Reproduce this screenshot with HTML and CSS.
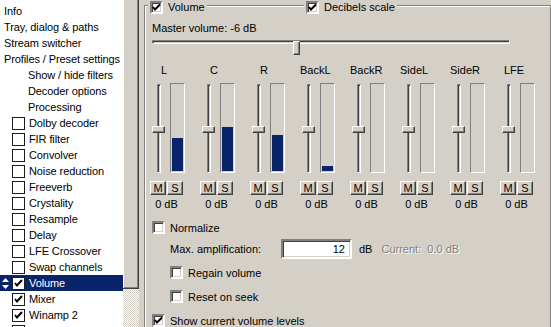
FILE: index.html
```html
<!DOCTYPE html>
<html lang="en">
<head>
    <meta charset="UTF-8">
    <title>Volume</title>
    <link rel="stylesheet" href="styles.css">
</head>
<body>
    <div class="sidebar">
        <div class="tree">
            <div class="tree-item">Info</div>
            <div class="tree-item">Tray, dialog &amp; paths</div>
            <div class="tree-item">Stream switcher</div>
            <div class="tree-item">Profiles / Preset settings</div>
            <div class="tree-item sub">Show / hide filters</div>
            <div class="tree-item sub">Decoder options</div>
            <div class="tree-item sub">Processing</div>
            <div class="tree-item filter"><span class="box"></span>Dolby decoder</div>
            <div class="tree-item filter"><span class="box"></span>FIR filter</div>
            <div class="tree-item filter"><span class="box"></span>Convolver</div>
            <div class="tree-item filter"><span class="box"></span>Noise reduction</div>
            <div class="tree-item filter"><span class="box"></span>Freeverb</div>
            <div class="tree-item filter"><span class="box"></span>Crystality</div>
            <div class="tree-item filter"><span class="box"></span>Resample</div>
            <div class="tree-item filter"><span class="box"></span>Delay</div>
            <div class="tree-item filter"><span class="box"></span>LFE Crossover</div>
            <div class="tree-item filter"><span class="box"></span>Swap channels</div>
            <div class="tree-item filter selected">
                <svg class="updown" width="7" height="11" viewBox="0 0 7 11"><path d="M3.5 0 L7 4 L0 4 Z M0 7 L7 7 L3.5 11 Z" fill="#fff"/></svg>
                <span class="box checked"><svg width="11" height="11" viewBox="0 0 11 11"><path d="M2 5 L4 7.5 L9 2" stroke="#000" stroke-width="2" fill="none"/></svg></span>Volume
            </div>
            <div class="tree-item filter"><span class="box checked"><svg width="11" height="11" viewBox="0 0 11 11"><path d="M2 5 L4 7.5 L9 2" stroke="#000" stroke-width="2" fill="none"/></svg></span>Mixer</div>
            <div class="tree-item filter"><span class="box checked"><svg width="11" height="11" viewBox="0 0 11 11"><path d="M2 5 L4 7.5 L9 2" stroke="#000" stroke-width="2" fill="none"/></svg></span>Winamp 2</div>
            <div class="tree-item filter"><span class="box"></span></div>
        </div>
        <div class="scrollbar">
            <div class="scroll-thumb"></div>
        </div>
    </div>

    <div class="panel">
        <div class="groupbox">
            <label class="gb-title">
                <span class="check on"><svg width="9" height="9" viewBox="0 0 9 9"><path d="M1 4 L3 6.5 L8 1.5" stroke="#000" stroke-width="2" fill="none"/></svg></span>Volume
            </label>
            <label class="gb-title db">
                <span class="check on"><svg width="9" height="9" viewBox="0 0 9 9"><path d="M1 4 L3 6.5 L8 1.5" stroke="#000" stroke-width="2" fill="none"/></svg></span>Decibels scale
            </label>

            <div class="master-label">Master volume: -6 dB</div>
            <div class="hslider">
                <div class="htrack"></div>
                <div class="hthumb"></div>
            </div>

            <div class="channels">
                <div class="ch">
                    <div class="ch-name">L</div>
                    <div class="ch-body">
                        <div class="vslider"><div class="vtrack"></div><div class="vthumb"></div></div>
                        <div class="meter"><div class="meter-fill" style="height:33px"></div></div>
                    </div>
                    <div class="ms"><button>M</button><button>S</button></div>
                    <div class="ch-db">0 dB</div>
                </div>
                <div class="ch">
                    <div class="ch-name">C</div>
                    <div class="ch-body">
                        <div class="vslider"><div class="vtrack"></div><div class="vthumb"></div></div>
                        <div class="meter"><div class="meter-fill" style="height:44px"></div></div>
                    </div>
                    <div class="ms"><button>M</button><button>S</button></div>
                    <div class="ch-db">0 dB</div>
                </div>
                <div class="ch">
                    <div class="ch-name">R</div>
                    <div class="ch-body">
                        <div class="vslider"><div class="vtrack"></div><div class="vthumb"></div></div>
                        <div class="meter"><div class="meter-fill" style="height:36px"></div></div>
                    </div>
                    <div class="ms"><button>M</button><button>S</button></div>
                    <div class="ch-db">0 dB</div>
                </div>
                <div class="ch">
                    <div class="ch-name">BackL</div>
                    <div class="ch-body">
                        <div class="vslider"><div class="vtrack"></div><div class="vthumb"></div></div>
                        <div class="meter"><div class="meter-fill" style="height:5px"></div></div>
                    </div>
                    <div class="ms"><button>M</button><button>S</button></div>
                    <div class="ch-db">0 dB</div>
                </div>
                <div class="ch">
                    <div class="ch-name">BackR</div>
                    <div class="ch-body">
                        <div class="vslider"><div class="vtrack"></div><div class="vthumb"></div></div>
                        <div class="meter"></div>
                    </div>
                    <div class="ms"><button>M</button><button>S</button></div>
                    <div class="ch-db">0 dB</div>
                </div>
                <div class="ch">
                    <div class="ch-name">SideL</div>
                    <div class="ch-body">
                        <div class="vslider"><div class="vtrack"></div><div class="vthumb"></div></div>
                        <div class="meter"></div>
                    </div>
                    <div class="ms"><button>M</button><button>S</button></div>
                    <div class="ch-db">0 dB</div>
                </div>
                <div class="ch">
                    <div class="ch-name">SideR</div>
                    <div class="ch-body">
                        <div class="vslider"><div class="vtrack"></div><div class="vthumb"></div></div>
                        <div class="meter"></div>
                    </div>
                    <div class="ms"><button>M</button><button>S</button></div>
                    <div class="ch-db">0 dB</div>
                </div>
                <div class="ch">
                    <div class="ch-name">LFE</div>
                    <div class="ch-body">
                        <div class="vslider"><div class="vtrack"></div><div class="vthumb"></div></div>
                        <div class="meter"></div>
                    </div>
                    <div class="ms"><button>M</button><button>S</button></div>
                    <div class="ch-db">0 dB</div>
                </div>
            </div>

            <label class="opt normalize"><span class="check"></span>Normalize</label>
            <div class="amp-row">
                <span class="amp-label">Max. amplification:</span>
                <span class="edit">12</span>
                <span class="unit">dB</span>
                <span class="disabled">Current:&nbsp; 0.0 dB</span>
            </div>
            <label class="opt indent regain"><span class="check"></span>Regain volume</label>
            <label class="opt indent reset"><span class="check"></span>Reset on seek</label>
            <label class="opt levels"><span class="check on"><svg width="9" height="9" viewBox="0 0 9 9"><path d="M1 4 L3 6.5 L8 1.5" stroke="#000" stroke-width="2" fill="none"/></svg></span>Show current volume levels</label>
        </div>
    </div>
</body>
</html>
```

FILE: styles.css
```css
body {
    margin: 0;
    width: 551px;
    height: 327px;
    overflow: hidden;
    display: flex;
    font-family: 'Liberation Sans', Arial, sans-serif;
    font-size: 11px;
    color: #000;
    background: #d4d0c8; /* classic dialog grey */
}

/* Left tree */
.sidebar {
    display: flex;
    width: 139px;
    flex: none;
}

.tree {
    width: 123px;
    padding-top: 3px;
    background: #fff;
    overflow: hidden;
}

.tree-item {
    height: 16px;
    display: flex;
    align-items: center;
    padding-left: 4px;
    white-space: nowrap;
    letter-spacing: -0.1px;
}

.tree-item.sub {
    padding-left: 28px;
}

.tree-item.filter {
    padding-left: 12px;
}

.tree-item.selected {
    position: relative;
    background: #0a246a; /* selection navy */
    color: #fff;
}

.updown {
    position: absolute;
    left: 2px;
    top: 3px;
}

.box {
    width: 11px;
    height: 11px;
    margin-right: 4px;
    border: 1px solid #1c1c1c;
    background: #fff;
    display: flex;
    flex: none;
}

.scrollbar {
    width: 16px;
    background: repeating-conic-gradient(#d4d0c8 0 25%, #fff 0 50%) 0 0 / 2px 2px;
}

.scroll-thumb {
    height: 289px;
    box-sizing: border-box;
    background: #d4d0c8;
    border-right: 1px solid #404040;
    border-bottom: 1px solid #404040;
    box-shadow: inset 1px 0 #fff, inset -1px -1px #808080;
}

/* Right panel */
.panel {
    flex: 1;
    padding: 5px 8px 0 5px;
}

.groupbox {
    position: relative;
    height: 340px;
    padding: 16px 0 0 5px;
    border: 1px solid #808080;
    box-shadow: inset 1px 1px #fff, 1px 1px #fff;
}

.gb-title {
    position: absolute;
    top: -6px;
    left: 3px;
    display: flex;
    align-items: center;
    height: 14px;
    padding: 0 2px;
    background: #d4d0c8;
}

.gb-title.db {
    left: 159px;
}

.check {
    width: 9px;
    height: 9px;
    margin-right: 5px;
    display: flex;
    flex: none;
    background: #fff;
    border: 2px solid;
    border-color: #808080 #fff #fff #808080;
    box-shadow: inset 1px 1px #404040, inset -1px -1px #d4d0c8;
}

.master-label {
    margin-left: 2px;
    line-height: 13px;
}

.hslider {
    position: relative;
    width: 358px;
    height: 15px;
    margin: 3px 0 0 2px;
}

.htrack {
    margin-top: 5px;
    height: 2px;
    border: 1px solid;
    border-color: #808080 #fff #fff #808080;
    box-shadow: inset 1px 1px #404040;
}

.hthumb {
    position: absolute;
    left: 141px;
    top: 1px;
    width: 5px;
    height: 12px;
    background: #d4d0c8;
    border: 1px solid;
    border-color: #fff #404040 #404040 #fff;
    box-shadow: inset -1px -1px #808080;
}

/* Channel strips */
.channels {
    display: flex;
    margin-top: 9px;
}

.ch {
    width: 50px;
    flex: none;
}

.ch-name {
    width: 28px;
    text-align: center;
    line-height: 13px;
}

.ch-body {
    display: flex;
    height: 90px;
    margin-top: 6px;
    padding-left: 2px;
}

.vslider {
    position: relative;
    width: 13px;
    height: 90px;
    display: flex;
    justify-content: center;
}

.vtrack {
    width: 2px;
    margin-top: 1px;
    border: 1px solid;
    border-color: #808080 #fff #fff #808080;
    box-shadow: inset 1px 1px #404040;
}

.vthumb {
    position: absolute;
    left: 0;
    top: 43px;
    width: 11px;
    height: 5px;
    background: #d4d0c8;
    border: 1px solid;
    border-color: #fff #404040 #404040 #fff;
    box-shadow: inset -1px -1px #808080;
}

.meter {
    width: 11px;
    height: 86px;
    margin-left: 5px;
    padding: 1px;
    display: flex;
    flex-direction: column;
    justify-content: flex-end;
    border: 1px solid;
    border-color: #808080 #fff #fff #808080;
}

.meter-fill {
    background: #0a246a;
}

.ms {
    display: flex;
    margin-top: 8px;
}

.ms button {
    width: 16px;
    height: 14px;
    padding: 0;
    font: inherit;
    line-height: 12px;
    color: #000;
    background: #d4d0c8;
    border: 1px solid;
    border-color: #fff #404040 #404040 #fff;
    box-shadow: inset -1px -1px #808080;
}

.ms button + button {
    margin-left: 1px;
}

.ch-db {
    width: 33px;
    margin-top: 3px;
    text-align: center;
    line-height: 13px;
}

/* Options below the strips */
.opt {
    display: flex;
    align-items: center;
    height: 13px;
    margin-left: 2px;
}

.indent {
    margin-left: 20px;
}

.normalize {
    margin-top: 10px;
}

.regain {
    margin-top: 7px;
}

.reset {
    margin-top: 11px;
}

.levels {
    margin-top: 11px;
}

.amp-row {
    display: flex;
    align-items: center;
    margin: 5px 0 0 20px;
}

.amp-label {
    width: 111px;
}

.edit {
    width: 62px;
    height: 16px;
    line-height: 16px;
    padding-right: 5px;
    text-align: right;
    background: #fff;
    border: 2px solid;
    border-color: #808080 #fff #fff #808080;
    box-shadow: inset 1px 1px #404040, inset -1px -1px #d4d0c8;
}

.unit {
    margin-left: 7px;
}

.disabled {
    margin-left: 9px;
    color: #808080;
    text-shadow: 1px 1px #fff;
}
```
